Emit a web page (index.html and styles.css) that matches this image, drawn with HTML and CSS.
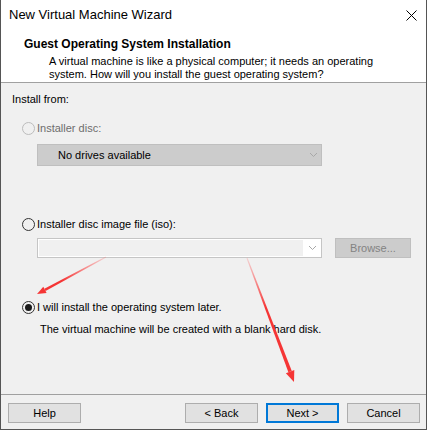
FILE: index.html
```html
<!DOCTYPE html>
<html lang="en">
<head>
    <meta charset="UTF-8">
    <meta name="viewport" content="width=device-width, initial-scale=1.0">
    <title>New Virtual Machine Wizard</title>
    <link rel="stylesheet" href="styles.css">
</head>
<body>
    <div class="screen">
        <div class="window">
            <div class="titlebar">
                <span class="title">New Virtual Machine Wizard</span>
                <svg class="close" width="11" height="11" viewBox="0 0 11 11">
                    <path d="M0.5 0.5 L10.5 10.5 M10.5 0.5 L0.5 10.5" stroke="#000" stroke-width="1" fill="none"/>
                </svg>
            </div>

            <div class="header">
                <h1>Guest Operating System Installation</h1>
                <p>A virtual machine is like a physical computer; it needs an operating<br>system. How will you install the guest operating system?</p>
            </div>

            <div class="content">
                <div class="caption">Install from:</div>

                <label class="option disabled"><span class="radio"></span>Installer disc:</label>
                <div class="select">
                    <span>No drives available</span>
                    <svg class="chevron" width="7" height="4" viewBox="0 0 7 4"><path d="M0 0 L3.5 3.5 L7 0" stroke="#a8a8a8" fill="none"/></svg>
                </div>

                <label class="option iso"><span class="radio"></span>Installer disc image file (iso):</label>
                <div class="file-row">
                    <div class="combo">
                        <div class="combo-field"></div>
                        <div class="combo-arrow">
                            <svg class="chevron" width="7" height="4" viewBox="0 0 7 4"><path d="M0 0 L3.5 3.5 L7 0" stroke="#a8a8a8" fill="none"/></svg>
                        </div>
                    </div>
                    <button class="browse" disabled>Browse...</button>
                </div>

                <label class="option later"><span class="radio checked"></span>I will install the operating system later.</label>
                <p class="note">The virtual machine will be created with a blank hard disk.</p>
            </div>

            <div class="footer">
                <button class="btn">Help</button>
                <span class="spacer"></span>
                <button class="btn">&lt; Back</button>
                <button class="btn default">Next &gt;</button>
                <button class="btn">Cancel</button>
            </div>
        </div>

        <!-- red pointer arrows drawn on top of the dialog -->
        <svg class="marks" width="428" height="430" viewBox="0 0 428 430">
            <defs>
                <linearGradient id="fadeA" gradientUnits="userSpaceOnUse" x1="106" y1="257" x2="62" y2="281">
                    <stop offset="0" stop-color="#ff5050" stop-opacity="0.2"/>
                    <stop offset="1" stop-color="#f53535"/>
                </linearGradient>
                <linearGradient id="fadeB" gradientUnits="userSpaceOnUse" x1="247" y1="258" x2="266" y2="308">
                    <stop offset="0" stop-color="#ff5050" stop-opacity="0.2"/>
                    <stop offset="1" stop-color="#f53535"/>
                </linearGradient>
            </defs>
            <polygon points="105.8,256.6 106.2,257.4 45.57,290.95 44.35,288.65" fill="url(#fadeA)"/>
            <polygon points="37,294 46.6,292.9 43.3,286.7" fill="#f53535"/>
            <polygon points="247.5,257.8 246.5,258.2 288.4,372.3 291.8,371.1" fill="url(#fadeB)"/>
            <polygon points="294,382 294.3,370.1 285.9,373.3" fill="#f53535"/>
        </svg>
    </div>
</body>
</html>
```

FILE: styles.css
```css
body {
    margin: 0;
    background: #ffffff;
    font-family: "Segoe UI", "Liberation Sans", Arial, sans-serif;
    font-size: 11px;
    color: #000000;
}
.screen {
    position: relative;
    width: 428px;
    height: 430px;
}
.window {
    width: 427px;
    height: 430px;
    box-sizing: border-box;
    border: 1px solid #555555;
    border-top: none;
    background: #f0f0f0;
    display: flex;
    flex-direction: column;
}

/* title bar */
.titlebar {
    height: 31px;
    box-sizing: border-box;
    padding: 7px 9px 0 8px;
    background: #ffffff;
    display: flex;
    justify-content: space-between;
    align-items: flex-start;
}
.title {
    font-size: 13px;
    line-height: 15px;
}
.close {
    margin-top: 3px;
}

/* white page header */
.header {
    height: 52px;
    box-sizing: border-box;
    padding: 6px 0 0 23px;
    background: #ffffff;
    border-bottom: 1px solid #a0a0a0;
}
.header h1 {
    margin: 0;
    font-size: 12px;
    font-weight: bold;
    line-height: 15px;
}
.header p {
    margin: 3px 0 0 25px;
    line-height: 13px;
}

/* options */
.content {
    flex: 1;
    padding: 8px 0 0 11px;
    line-height: 16px;
}
.caption {
    height: 16px;
}
.option {
    display: flex;
    align-items: flex-start;
    height: 16px;
    margin-top: 13px;
}
.option.iso {
    margin-top: 50px;
}
.option.later {
    margin-top: 41px;
}
.option.disabled {
    color: #6d6d6d;
}
.radio {
    width: 13px;
    height: 13px;
    box-sizing: border-box;
    margin: 2px 2px 0 10px;
    border: 1px solid #333333;
    border-radius: 50%;
    display: flex;
    align-items: center;
    justify-content: center;
}
.option.disabled .radio {
    border-color: #bcbcbc;
}
.radio.checked::after {
    content: "";
    width: 7px;
    height: 7px;
    border-radius: 50%;
    background: #1a1a1a;
}

.select {
    width: 285px;
    height: 22px;
    box-sizing: border-box;
    margin: 8px 0 0 25px;
    padding: 0 4px 0 20px;
    background: #cccccc;
    border: 1px solid #bfbfbf;
    line-height: 20px;
    display: flex;
    justify-content: space-between;
    align-items: center;
}

.file-row {
    display: flex;
    gap: 13px;
    margin: 6px 0 0 25px;
}
.combo {
    width: 285px;
    height: 20px;
    box-sizing: border-box;
    border: 1px solid #c5c5c5;
    background: #ffffff;
    padding: 1px 0 1px 1px;
    display: flex;
}
.combo-field {
    flex: 1;
    background: #f0f0f0;
}
.combo-arrow {
    width: 18px;
    display: flex;
    align-items: center;
    justify-content: center;
}
.browse {
    width: 76px;
    height: 20px;
    box-sizing: border-box;
    padding: 0;
    background: #cccccc;
    border: 1px solid #bfbfbf;
    color: #838383;
    font: inherit;
}

.note {
    margin: 6px 0 0 28px;
}

/* bottom buttons */
.footer {
    border-top: 1px solid #a0a0a0;
    padding: 8px 6px 6px 7px;
    display: flex;
    gap: 8px;
}
.spacer {
    flex: 1;
}
.btn {
    width: 73px;
    height: 20px;
    box-sizing: border-box;
    padding: 0;
    background: #e1e1e1;
    border: 1px solid #adadad;
    font: inherit;
    color: #000000;
}
.btn.default {
    border: 2px solid #0078d7;
}

.marks {
    position: absolute;
    left: 0;
    top: 0;
    pointer-events: none;
}
```
